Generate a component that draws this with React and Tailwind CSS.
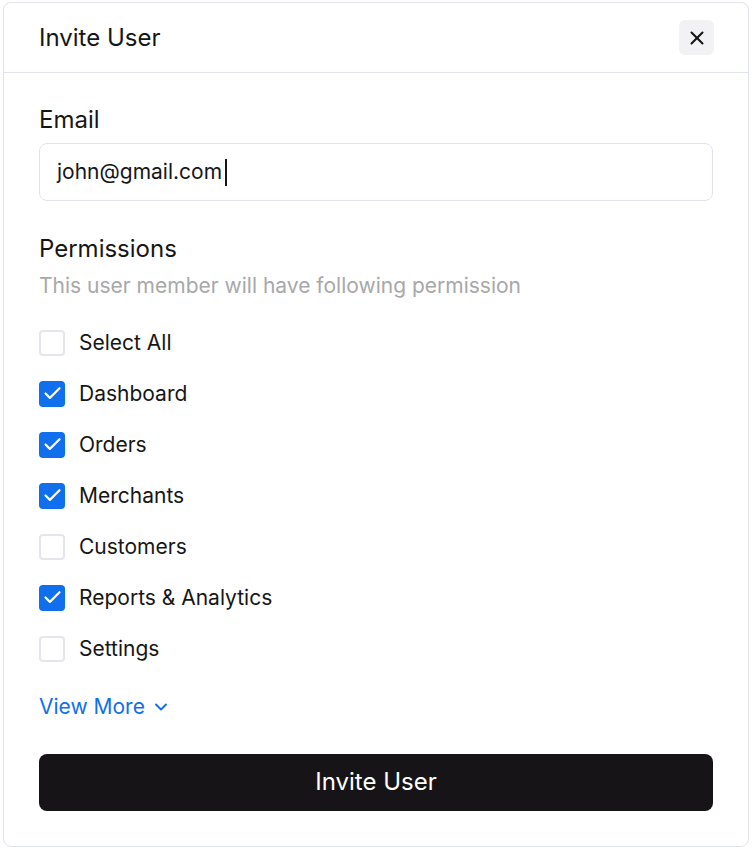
import React, { useState } from "react";
import { X, ChevronDown, Check } from "lucide-react";

const permissions = [
  { label: "Select All", checked: false },
  { label: "Dashboard", checked: true },
  { label: "Orders", checked: true },
  { label: "Merchants", checked: true },
  { label: "Customers", checked: false },
  { label: "Reports & Analytics", checked: true },
  { label: "Settings", checked: false },
];

const CheckRow = ({ label, checked }) => (
  <div className="flex items-center h-[51px]">
    {checked ? (
      <div className="w-[26px] h-[26px] rounded-[4px] bg-[#0f6fec] flex items-center justify-center">
        <Check size={21} strokeWidth={2.5} className="text-white" />
      </div>
    ) : (
      <div className="w-[26px] h-[26px] rounded-[4px] border-2 border-[#e4e6ec] bg-white" />
    )}
    <span className="ml-[14px] text-[21px] text-[#161616]">{label}</span>
  </div>
);

export default function App() {
  const [email] = useState("john@gmail.com");
  return (
    <div className="w-[753px] h-[852px] bg-white pt-[2px] pl-[3px]" style={{ fontFamily: "Inter, 'Noto Sans', sans-serif" }}>
      <div className="w-[746px] h-[845px] rounded-[8px] border border-[#e1e3ea] bg-white flex flex-col">
        <div className="h-[70px] flex items-center justify-between pl-[35px] pr-[34px] border-b border-[#e1e3ea]">
          <h1 className="text-[24px] text-[#161616]">Invite User</h1>
          <button className="w-[35px] h-[35px] rounded-[6px] bg-[#f2f1f4] flex items-center justify-center">
            <X size={22} strokeWidth={2.25} className="text-[#161616]" />
          </button>
        </div>
        <div className="px-[35px] pt-[32px] flex flex-col">
          <label className="text-[24px] text-[#161616] leading-[30px]">Email</label>
          <div className="mt-[8px] h-[58px] rounded-[8px] border border-[#e1e3ea] flex items-center px-[17px]">
            <span className="text-[21px] text-[#161616]">{email}</span>
            <span className="ml-[3px] w-[2px] h-[27px] bg-[#161616]" />
          </div>
          <h2 className="mt-[33px] text-[24px] text-[#161616] leading-[30px]">Permissions</h2>
          <p className="mt-[9px] text-[21px] text-[#a8a8a8] leading-[26px]">This user member will have following permission</p>
          <div className="mt-[18px] flex flex-col">
            {permissions.map((p) => (
              <CheckRow key={p.label} {...p} />
            ))}
          </div>
          <button className="mt-[17px] self-start flex items-center gap-[6px] text-[21px] text-[#0f6fec]">
            View More
            <ChevronDown size={20} strokeWidth={2.25} />
          </button>
          <button className="mt-[31px] h-[57px] rounded-[8px] bg-[#161417] text-white text-[24px]">
            Invite User
          </button>
        </div>
      </div>
    </div>
  );
}
